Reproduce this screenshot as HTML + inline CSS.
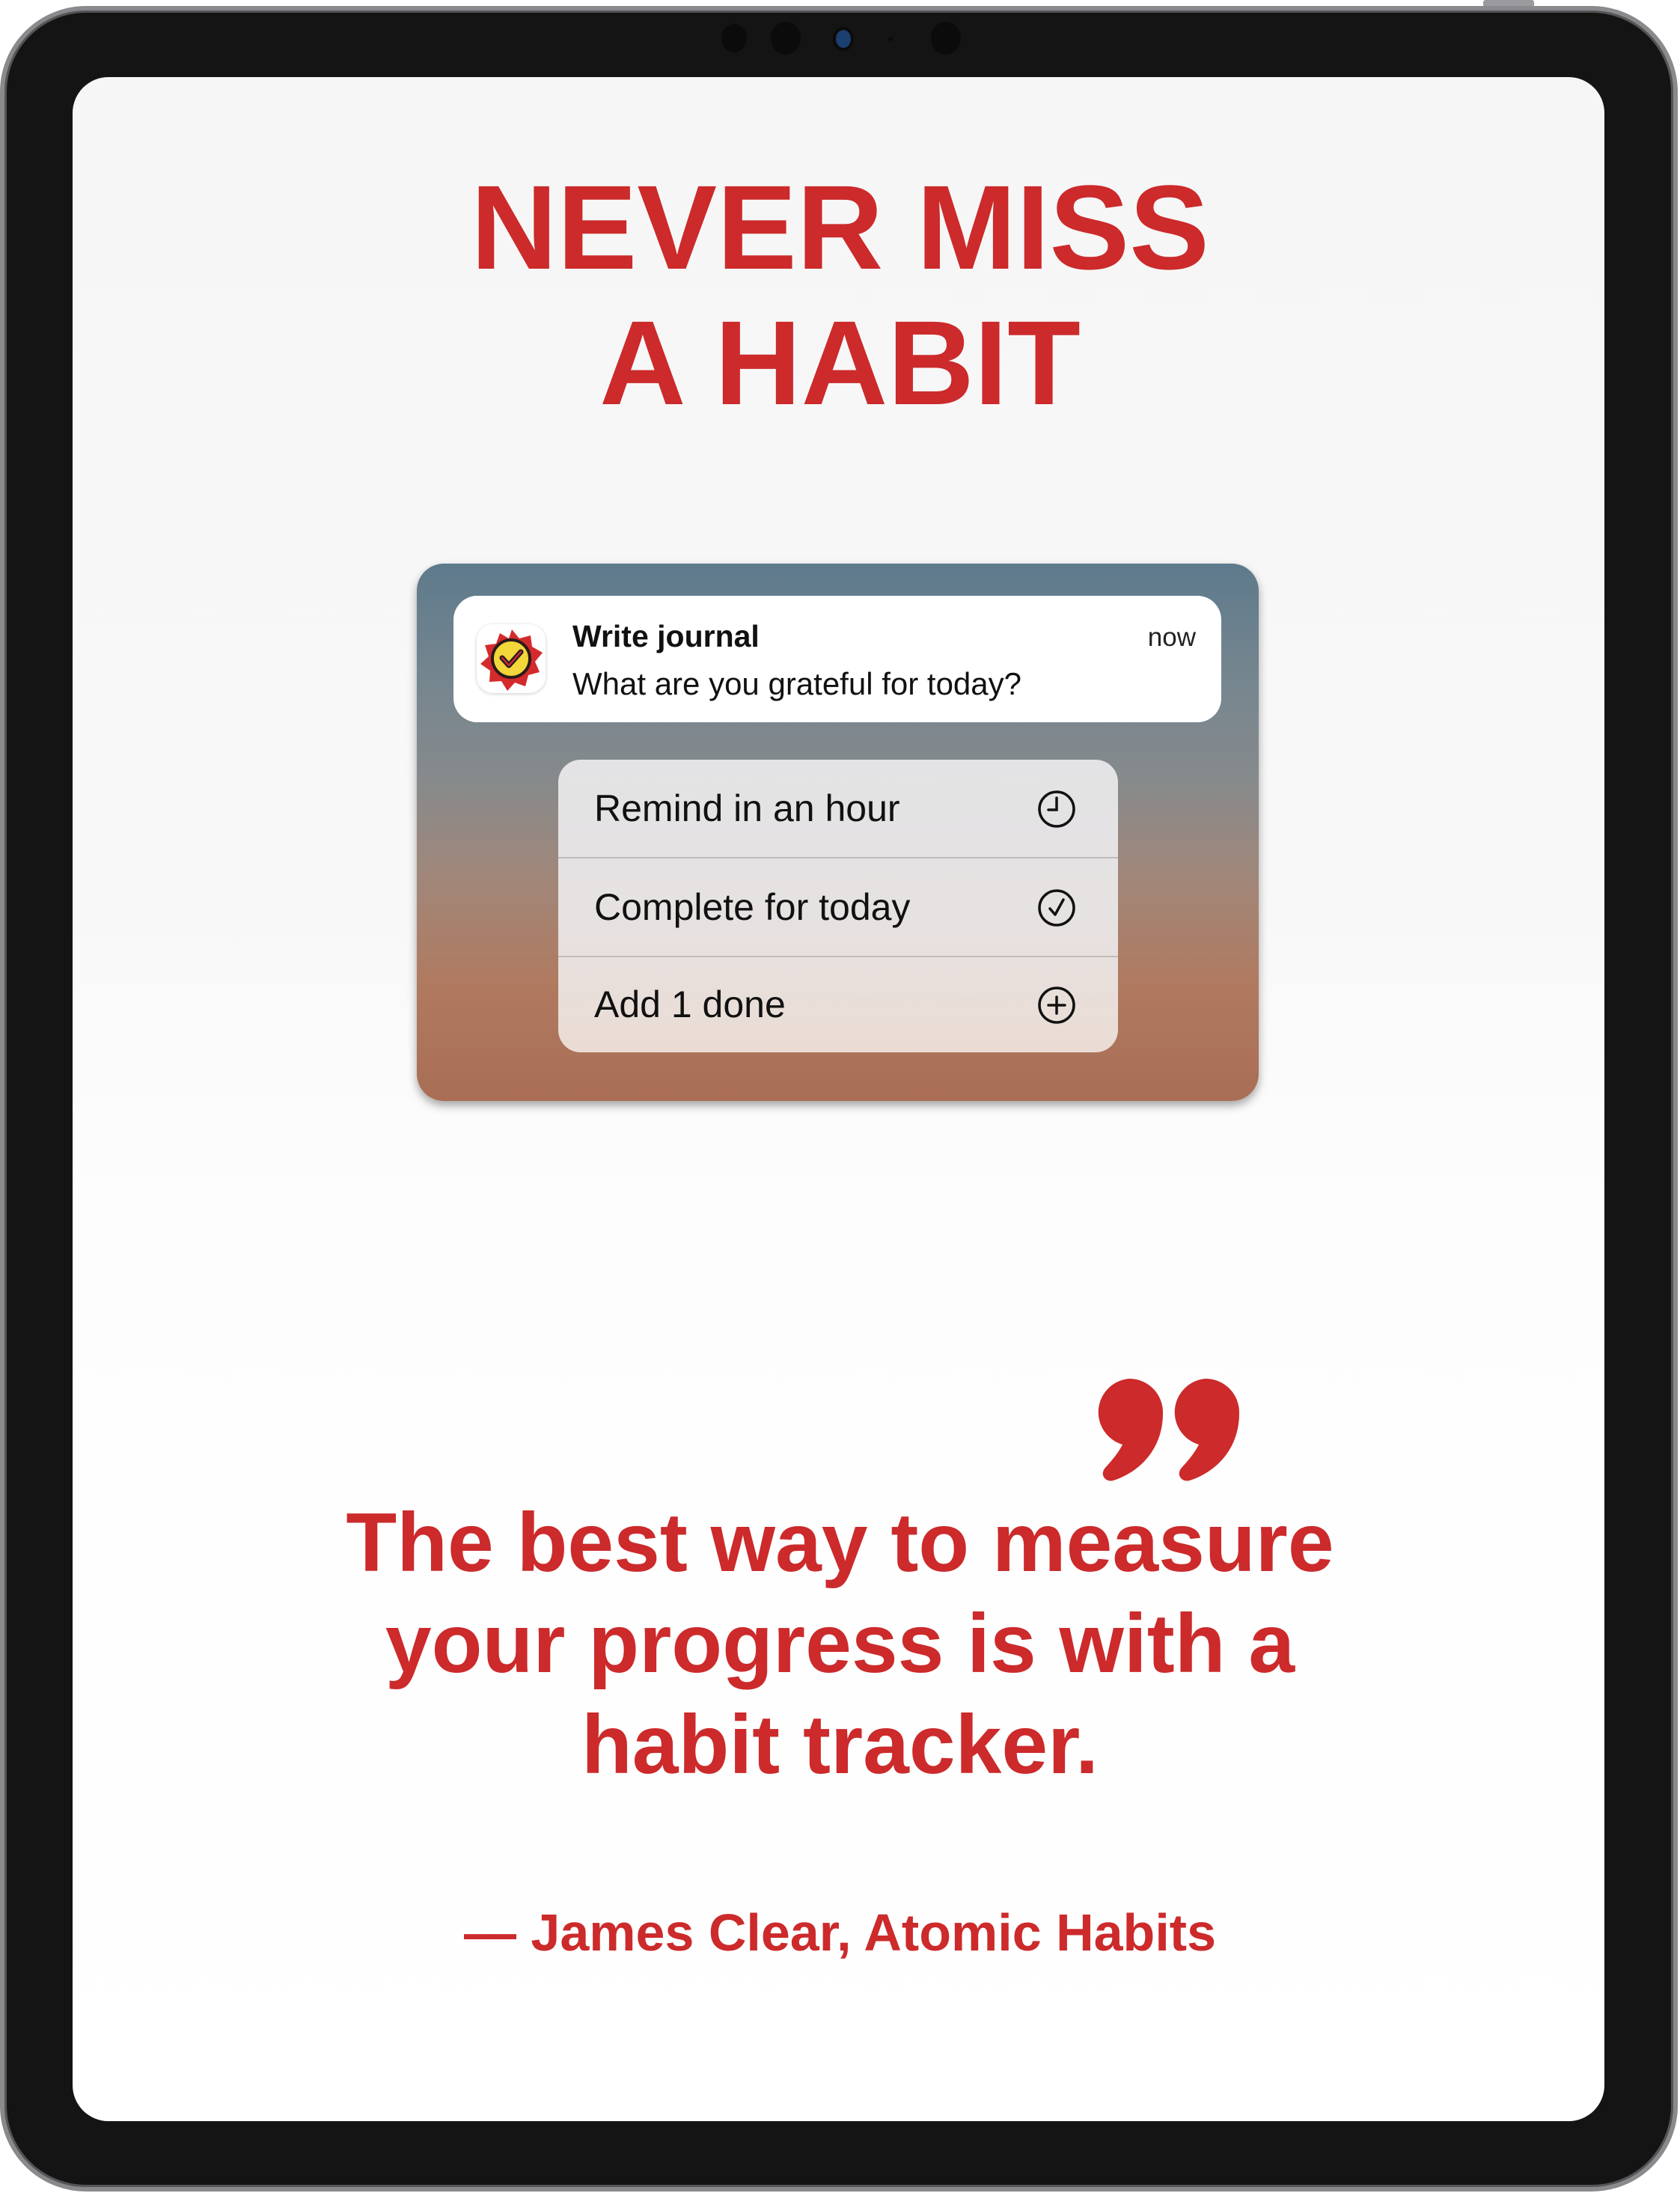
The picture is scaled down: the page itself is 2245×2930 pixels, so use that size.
<!DOCTYPE html>
<html><head><meta charset="utf-8"><style>
*{margin:0;padding:0;box-sizing:border-box}
html,body{width:2245px;height:2930px;background:#fff;overflow:hidden;font-family:"Liberation Sans",sans-serif}
.dev{position:absolute;left:0;top:8px;width:2242px;height:2920px;border-radius:115px;background:#141414;border:6px solid #8a8a8e;box-shadow:inset 0 0 0 3px #555}
.btn{position:absolute;left:1982px;top:0;width:68px;height:10px;background:#9a9a9e;border-radius:3px}
.screen{position:absolute;left:97px;top:103px;width:2047px;height:2731px;border-radius:48px;background:linear-gradient(#f6f6f6 0,#f8f8f8 1100px,#fdfdfd 1500px,#fff)}
.dot{position:absolute;border-radius:50%;background:#0b0b0b}
.red{color:#cc2a2b;font-weight:bold;text-align:center;position:absolute;left:0;width:2245px}
.card{position:absolute;left:557px;top:753px;width:1125px;height:718px;border-radius:36px;overflow:hidden;
background:linear-gradient(180deg,#5e7a8c 0%,#76868f 22%,#868a8c 40%,#a0877a 58%,#b07a60 78%,#a96e55 100%);box-shadow:0 6px 12px rgba(0,0,0,.35)}
.notif{position:absolute;left:49px;top:43px;width:1026px;height:169px;background:#fff;border-radius:32px}
.menu{position:absolute;left:189px;top:262px;width:748px;height:391px;border-radius:30px;background:linear-gradient(#e3e3e5,#e6e2e2 50%,#eadcd4);overflow:hidden}
.row{position:absolute;left:0;width:748px;height:131px;font-size:50px;color:#111;padding-left:48px;line-height:131px}
.row svg{position:absolute;right:56px;top:40px}
.sep{position:absolute;left:0;width:748px;height:2px;background:#c0bcbb}
</style></head><body>
<div class="btn"></div>
<div class="dev"></div>
<div class="dot" style="left:964px;top:32px;width:34px;height:38px"></div>
<div class="dot" style="left:1030px;top:29px;width:40px;height:44px"></div>
<div class="dot" style="left:1117px;top:40px;width:20px;height:24px;background:#1b3f6e;box-shadow:0 0 0 4px #0b0b0b"></div>
<div class="dot" style="left:1187px;top:49px;width:6px;height:6px"></div>
<div class="dot" style="left:1244px;top:29px;width:40px;height:44px"></div>
<div class="screen"></div>
<div class="red" style="top:213px;font-size:160px;line-height:181px">NEVER MISS<br>A HABIT</div>
<div class="card">
 <div class="notif">
  <div style="position:absolute;left:31px;top:38px;width:92px;height:92px;border-radius:22px;background:#fff;box-shadow:0 1px 5px rgba(0,0,0,.2)">
   <svg width="92" height="92" viewBox="0 0 92 92">
    <polygon fill="#d42a2c" points="46,6 56,18 71,14 73,29 87,37 77,49 83,63 68,67 64,82 50,77 40,88 32,75 16,76 17,61 4,52 15,42 10,27 25,25 30,11 42,18" transform="translate(1,1)"/>
    <circle cx="46" cy="46" r="25" fill="#f2d63a" stroke="#2a1a1a" stroke-width="4"/>
    <path d="M34 45 L43 55 L59 37" fill="none" stroke="#2a1a1a" stroke-width="7" stroke-linecap="round" stroke-linejoin="round"/>
    <path d="M34 45 L43 55 L59 37" fill="none" stroke="#c8283a" stroke-width="2.5" stroke-linecap="round" stroke-linejoin="round"/>
   </svg>
  </div>
  <div style="position:absolute;left:159px;top:31px;font-size:41px;font-weight:bold;color:#111">Write journal</div>
  <div style="position:absolute;left:159px;top:94px;font-size:42px;color:#111">What are you grateful for today?</div>
  <div style="position:absolute;right:34px;top:36px;font-size:35px;color:#222">now</div>
 </div>
 <div class="menu">
  <div class="row" style="top:0">Remind in an hour<svg width="52" height="52" viewBox="0 0 52 52"><circle cx="26" cy="26" r="23" fill="none" stroke="#111" stroke-width="3.5"/><path d="M26 11 V27 H15" fill="none" stroke="#111" stroke-width="3.5" stroke-linecap="round"/></svg></div>
  <div class="sep" style="top:130px"></div>
  <div class="row" style="top:132px">Complete for today<svg width="52" height="52" viewBox="0 0 52 52"><circle cx="26" cy="26" r="23" fill="none" stroke="#111" stroke-width="3.5"/><path d="M17 27 L24 35 L35 15" fill="none" stroke="#111" stroke-width="3.5" stroke-linecap="round" stroke-linejoin="round"/></svg></div>
  <div class="sep" style="top:262px"></div>
  <div class="row" style="top:262px">Add 1 done<svg width="52" height="52" viewBox="0 0 52 52"><circle cx="26" cy="26" r="23" fill="none" stroke="#111" stroke-width="3.5"/><path d="M26 15 V37 M15 26 H37" fill="none" stroke="#111" stroke-width="3.5" stroke-linecap="round"/></svg></div>
 </div>
</div>
<svg style="position:absolute;left:1464px;top:1842px" width="196" height="138" viewBox="0 0 196 138">
 <g fill="#cc2a2b">
  <path d="M45 0 A45 45 0 0 1 90 46 C90 95 58 125 24 136 C13 139 5 128 13 119 C24 107 31 98 36 88 A45 45 0 0 1 45 0 Z"/>
  <path transform="translate(102,0)" d="M45 0 A45 45 0 0 1 90 46 C90 95 58 125 24 136 C13 139 5 128 13 119 C24 107 31 98 36 88 A45 45 0 0 1 45 0 Z"/>
 </g>
</svg>
<div class="red" style="top:1994px;font-size:111px;line-height:135px">The best way to measure<br>your progress is with a<br>habit tracker.</div>
<div class="red" style="top:2542px;font-size:70px;line-height:80px">— James Clear, Atomic Habits</div>
</body></html>
